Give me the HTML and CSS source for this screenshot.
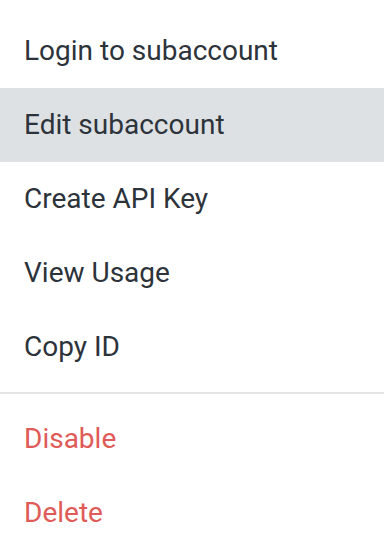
FILE: index.html
```html
<!DOCTYPE html>
<html>
<head>
<meta charset="utf-8">
<link rel="stylesheet" href="styles.css">
</head>
<body>
<div class="menu">
  <div class="item">Login to subaccount</div>
  <div class="item active">Edit subaccount</div>
  <div class="item">Create API Key</div>
  <div class="item">View Usage</div>
  <div class="item">Copy ID</div>
  <div class="divider"></div>
  <div class="item danger">Disable</div>
  <div class="item danger">Delete</div>
</div>
</body>
</html>
```
FILE: styles.css
```css
html, body {
  margin: 0;
  padding: 0;
  background: #ffffff;
}
.menu {
  width: 384px;
  padding-top: 14px;
  font-family: Roboto, "Liberation Sans", sans-serif;
  font-size: 28px;
  color: #2d333a;
}
.item {
  height: 74px;
  line-height: 74px;
  padding-left: 24px;
  white-space: nowrap;
}
.item.active {
  background: #dde1e4;
}
.item.danger {
  color: #e05b57;
}
.divider {
  height: 2px;
  background: #e5e5e5;
  margin: 8px 0;
}
```
